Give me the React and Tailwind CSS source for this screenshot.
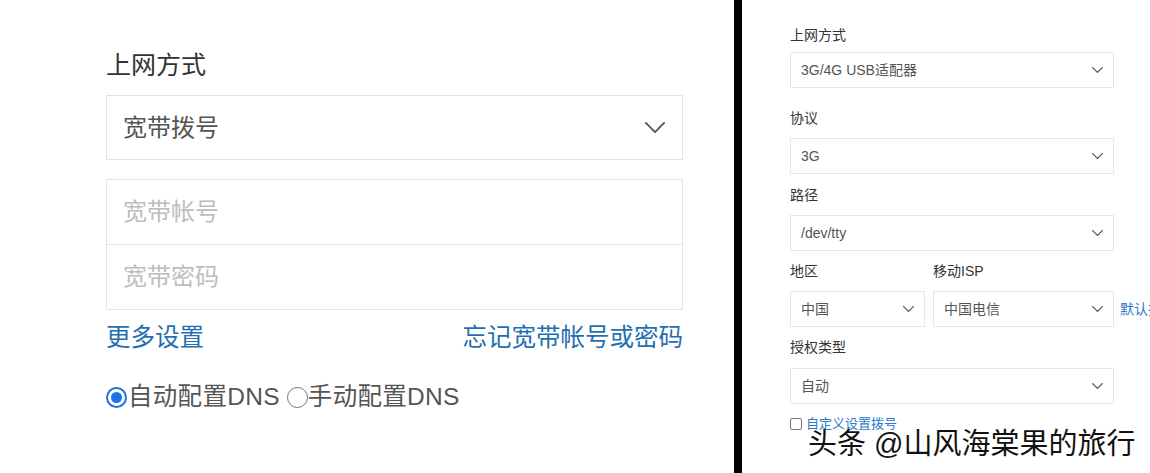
import React from "react";

const FONT = { fontFamily: '"Liberation Sans", "Noto Sans CJK SC", sans-serif' };

function Chevron({ w = 10, h = 6, stroke = "#555", sw = 1.4 }) {
  return (
    <svg width={w} height={h} viewBox={`0 0 ${w} ${h}`} fill="none">
      <path d={`M${sw / 2} ${sw / 2} L${w / 2} ${h - sw / 2} L${w - sw / 2} ${sw / 2}`} stroke={stroke} strokeWidth={sw} strokeLinecap="round" strokeLinejoin="round" />
    </svg>
  );
}

function SmallSelect({ text, className = "" }) {
  return (
    <div className={`h-[36px] border border-[#e6e6e6] bg-white flex items-center justify-between pl-[10px] pr-[10px] ${className}`}>
      <span className="text-[14px] text-[#555] leading-[20px]">{text}</span>
      <Chevron w={11} h={6} stroke="#555" sw={1.3} />
    </div>
  );
}

function Label({ children, className = "" }) {
  return <div className={`text-[14px] leading-[20px] text-[#333] ${className}`}>{children}</div>;
}

export default function App() {
  return (
    <div className="relative w-[1150px] h-[473px] overflow-hidden bg-white flex" style={FONT}>
      {/* Left panel */}
      <div className="w-[734px] h-full bg-white pl-[106px]">
        <div className="w-[577px] flex flex-col">
          <div className="mt-[49px] h-[32px] leading-[32px] text-[25px] text-[#333]">上网方式</div>
          <div className="mt-[14px] h-[65px] border border-[#e3e3e3] flex items-center justify-between pl-[16px] pr-[17px]">
            <span className="text-[24px] text-[#555]">宽带拨号</span>
            <Chevron w={20} h={11} stroke="#555" sw={1.8} />
          </div>
          <div className="mt-[19px] border border-[#e3e3e3] flex flex-col">
            <div className="h-[64px] flex items-center pl-[16px] text-[24px] text-[#bdbdbd]">宽带帐号</div>
            <div className="h-px bg-[#e3e3e3]" />
            <div className="h-[64px] flex items-center pl-[16px] text-[24px] text-[#bdbdbd]">宽带密码</div>
          </div>
          <div className="mt-[12px] h-[32px] flex items-center justify-between text-[24.5px] text-[#1f6fb2] leading-[32px]">
            <span>更多设置</span>
            <span>忘记宽带帐号或密码</span>
          </div>
          <div className="mt-[27px] h-[32px] flex items-center text-[24.5px] text-[#555]">
            <span className="w-[21px] h-[21px] rounded-full border-2 border-[#1a73e8] flex items-center justify-center mr-[1px]">
              <span className="w-[11px] h-[11px] rounded-full bg-[#1a73e8]" />
            </span>
            <span className="tracking-[0.3px]">自动配置DNS</span>
            <span className="ml-[7px] w-[21px] h-[21px] rounded-full border border-[#767676] bg-white" />
            <span className="tracking-[0.3px]">手动配置DNS</span>
          </div>
        </div>
      </div>

      {/* Divider bar */}
      <div className="w-[8px] h-full bg-black" />

      {/* Right panel */}
      <div className="flex-1 h-full bg-white pl-[48px]">
        <div className="w-[324px] flex flex-col">
          <Label className="mt-[25px]">上网方式</Label>
          <SmallSelect className="mt-[7px]" text="3G/4G USB适配器" />
          <Label className="mt-[20px]">协议</Label>
          <SmallSelect className="mt-[10px]" text="3G" />
          <Label className="mt-[11px]">路径</Label>
          <SmallSelect className="mt-[10px]" text="/dev/tty" />
          <div className="mt-[10px] flex gap-[8px]">
            <Label className="w-[135px]">地区</Label>
            <Label>移动ISP</Label>
          </div>
          <div className="mt-[10px] flex gap-[8px] relative">
            <SmallSelect className="w-[135px]" text="中国" />
            <SmallSelect className="flex-1" text="中国电信" />
            <span className="absolute left-[330px] top-[8px] whitespace-nowrap text-[14px] leading-[20px] text-[#2a7cc7]">默认拨号</span>
          </div>
          <Label className="mt-[10px]">授权类型</Label>
          <SmallSelect className="mt-[11px]" text="自动" />
          <div className="mt-[10px] flex items-center h-[20px]">
            <span className="w-[12px] h-[12px] border border-[#777] rounded-[2px] bg-white" />
            <span className="ml-[4px] text-[13px] text-[#2a7cc7] leading-[20px]">自定义设置拨号</span>
          </div>
        </div>
      </div>

      {/* Watermark overlay */}
      <div
        className="absolute left-[808px] top-[425px] text-[29px] leading-[38px] text-[#111] whitespace-nowrap"
        style={{ ...FONT, textShadow: "1px 1px 0 #fff, -1px 0 0 rgba(255,255,255,0.7)" }}
      >
        头条 @山风海棠果的旅行
      </div>
    </div>
  );
}
